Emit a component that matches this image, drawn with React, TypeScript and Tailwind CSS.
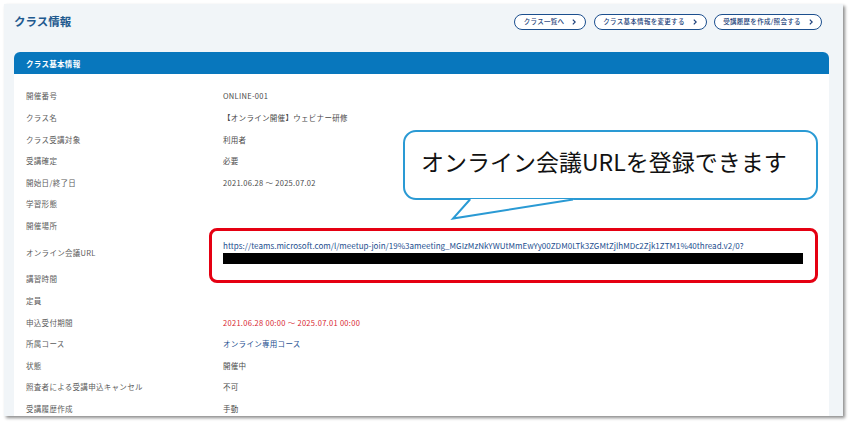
import React from 'react';

const rows: { label: string; value?: string; tone?: 'red' | 'link' }[] = [
  { label: '開催番号', value: 'ONLINE-001' },
  { label: 'クラス名', value: '【オンライン開催】ウェビナー研修' },
  { label: 'クラス受講対象', value: '利用者' },
  { label: '受講確定', value: '必要' },
  { label: '開始日/終了日', value: '2021.06.28 ～ 2025.07.02' },
  { label: '学習形態' },
  { label: '開催場所' },
];

const rowsAfter: { label: string; value?: string; tone?: 'red' | 'link' }[] = [
  { label: '講習時間' },
  { label: '定員' },
  { label: '申込受付期間', value: '2021.06.28 00:00 ～ 2025.07.01 00:00', tone: 'red' },
  { label: '所属コース', value: 'オンライン専用コース', tone: 'link' },
  { label: '状態', value: '開催中' },
  { label: '照査者による受講申込キャンセル', value: '不可' },
  { label: '受講履歴作成', value: '手動' },
];

const meetingUrl =
  'https://teams.microsoft.com/l/meetup-join/19%3ameeting_MGIzMzNkYWUtMmEwYy00ZDM0LTk3ZGMtZjlhMDc2Zjk1ZTM1%40thread.v2/0?';

function Row({ label, value, tone }: { label: string; value?: string; tone?: 'red' | 'link' }) {
  const valueColor = tone === 'red' ? 'text-[#d8262f]' : tone === 'link' ? 'text-[#1d4f8f]' : 'text-[#4a4a4a]';
  return (
    <div className="flex h-[21.6px] items-center">
      <div className="w-[209px] shrink-0 pl-[12px] text-[7.5px] tracking-[0.3px] text-[#5b5b5b]">{label}</div>
      <div className={`text-[7.5px] tracking-[0.3px] ${valueColor}`}>{value}</div>
    </div>
  );
}

function PillButton({ label, width }: { label: string; width: string }) {
  return (
    <button
      type="button"
      className={`flex h-[16px] items-center justify-center gap-[8px] rounded-full border-[1.3px] border-[#1c4f8e] bg-white text-[6.5px] font-medium tracking-[0.3px] text-[#1c3f7a] ${width}`}
    >
      <span>{label}</span>
      <svg width="4" height="6" viewBox="0 0 4 6" fill="none">
        <path d="M0.8 0.6 L3.2 3 L0.8 5.4" stroke="#1c3f7a" strokeWidth="1.2" />
      </svg>
    </button>
  );
}

export default function App() {
  return (
    <div className="relative h-[423px] w-[849px] overflow-hidden bg-white font-['Noto_Sans_CJK_JP','Noto_Sans',sans-serif]">
      <div className="ml-[4px] mt-[4px] h-[412px] w-[839px] overflow-hidden bg-[#f1f5f8] shadow-[2px_2px_3px_rgba(0,0,0,0.45)]">
        <div className="flex items-center justify-between pl-[10px] pr-[21px] pt-[9px]">
          <h1 className="text-[11.5px] font-bold text-[#1f5a8f]">クラス情報</h1>
          <div className="flex gap-[7.5px]">
            <PillButton label="クラス一覧へ" width="w-[72px]" />
            <PillButton label="クラス基本情報を変更する" width="w-[113px]" />
            <PillButton label="受講履歴を作成/照会する" width="w-[108px]" />
          </div>
        </div>

        <div className="ml-[10px] mr-[14px] mt-[22px] rounded-t-[6px] bg-white">
          <div className="flex h-[22px] items-center rounded-t-[6px] bg-[#0877bd] pl-[12px] text-[7.5px] font-bold tracking-[0.3px] text-white">
            クラス基本情報
          </div>
          <div className="pt-[11px]">
            {rows.map((r) => (
              <Row key={r.label} {...r} />
            ))}
            <div className="flex h-[31.8px] items-center">
              <div className="w-[209px] shrink-0 pl-[12px] text-[7.5px] tracking-[0.3px] text-[#5b5b5b]">オンライン会議URL</div>
              <div className="flex flex-col pt-[1px]">
                <span className="text-[8.05px] leading-[10px] text-[#1d4f8f]">{meetingUrl}</span>
                <div className="mt-[1.5px] h-[11.5px] w-[580px] bg-black" />
              </div>
            </div>
            {rowsAfter.map((r) => (
              <Row key={r.label} {...r} />
            ))}
          </div>
        </div>
      </div>

      {/* annotation: red frame around URL */}
      <div className="absolute left-[209px] top-[228px] h-[55px] w-[609px] rounded-[8px] border-[3px] border-[#e50012]" />

      {/* annotation: speech bubble */}
      <div className="absolute left-[403px] top-[130px] flex h-[70px] w-[415px] items-start rounded-[13px] border-[2px] border-[#2a9ad4] bg-white pl-[16px] pt-[14px]">
        <span className="text-[23px] leading-[30px] text-[#111]">オンライン会議URLを登録できます</span>
      </div>
      <svg className="absolute left-[440px] top-[195px]" width="150" height="30" viewBox="0 0 150 30">
        <polygon points="31,4 13,24 134,4" fill="white" />
        <polyline points="30,4.5 13,23.5 133,4.5" fill="none" stroke="#2a9ad4" strokeWidth="2" strokeLinejoin="miter" />
      </svg>
    </div>
  );
}
